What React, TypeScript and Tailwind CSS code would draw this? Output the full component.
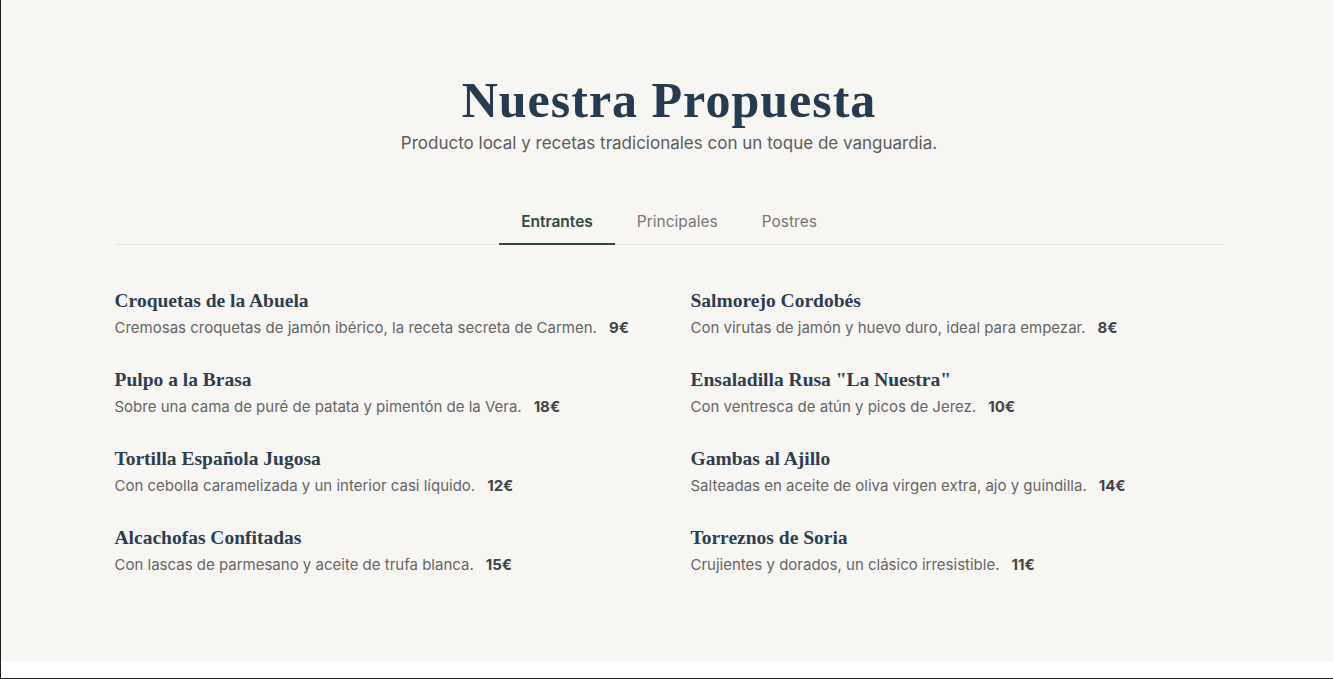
const dishes = [
  { name: "Croquetas de la Abuela", desc: "Cremosas croquetas de jamón ibérico, la receta secreta de Carmen.", price: "9€" },
  { name: "Salmorejo Cordobés", desc: "Con virutas de jamón y huevo duro, ideal para empezar.", price: "8€" },
  { name: "Pulpo a la Brasa", desc: "Sobre una cama de puré de patata y pimentón de la Vera.", price: "18€" },
  { name: 'Ensaladilla Rusa "La Nuestra"', desc: "Con ventresca de atún y picos de Jerez.", price: "10€" },
  { name: "Tortilla Española Jugosa", desc: "Con cebolla caramelizada y un interior casi líquido.", price: "12€" },
  { name: "Gambas al Ajillo", desc: "Salteadas en aceite de oliva virgen extra, ajo y guindilla.", price: "14€" },
  { name: "Alcachofas Confitadas", desc: "Con lascas de parmesano y aceite de trufa blanca.", price: "15€" },
  { name: "Torreznos de Soria", desc: "Crujientes y dorados, un clásico irresistible.", price: "11€" },
];

const tabs = ["Entrantes", "Principales", "Postres"];

const serif = "font-['Liberation_Serif',serif]";
const sans = "font-['Inter',sans-serif]";

export default function App() {
  return (
    <div className="h-[679px] w-full border-l border-b border-[#1e1e1e] bg-white">
      <section className="h-[661px] bg-[#f7f6f2] pt-[70px] pl-[4px]">
        <div className="mx-auto w-[1109px]">
          <h1 className={`${serif} text-center text-[50px] leading-[60px] font-bold tracking-[1px] text-[#263a50]`}>
            Nuestra Propuesta
          </h1>
          <p className={`${sans} mt-[1px] text-center text-[17px] leading-6 text-[#5c5c5c]`}>
            Producto local y recetas tradicionales con un toque de vanguardia.
          </p>

          <div className="mt-[47px] flex justify-center border-b border-[#e6e5e1]">
            {tabs.map((t, i) => (
              <button
                key={t}
                className={`${sans} -mb-px px-[22px] pt-[10px] pb-[11px] text-[15.5px] leading-5 ${
                  i === 0
                    ? "border-b-2 border-[#2f4a3f] font-semibold text-[#2f4a3f]"
                    : "border-b-2 border-transparent text-[#777]"
                }`}
              >
                {t}
              </button>
            ))}
          </div>

          <div className="mt-[42px] grid grid-cols-2 gap-x-[43px] gap-y-[27px]">
            {dishes.map((d) => (
              <div key={d.name}>
                <h3 className={`${serif} text-[19.5px] leading-7 font-bold text-[#2c3e50]`}>{d.name}</h3>
                <p className={`${sans} mt-[2px] text-[15px] leading-[22px] text-[#666]`}>
                  {d.desc}
                  <span className="ml-3 font-bold text-[#444]">{d.price}</span>
                </p>
              </div>
            ))}
          </div>
        </div>
      </section>
    </div>
  );
}
